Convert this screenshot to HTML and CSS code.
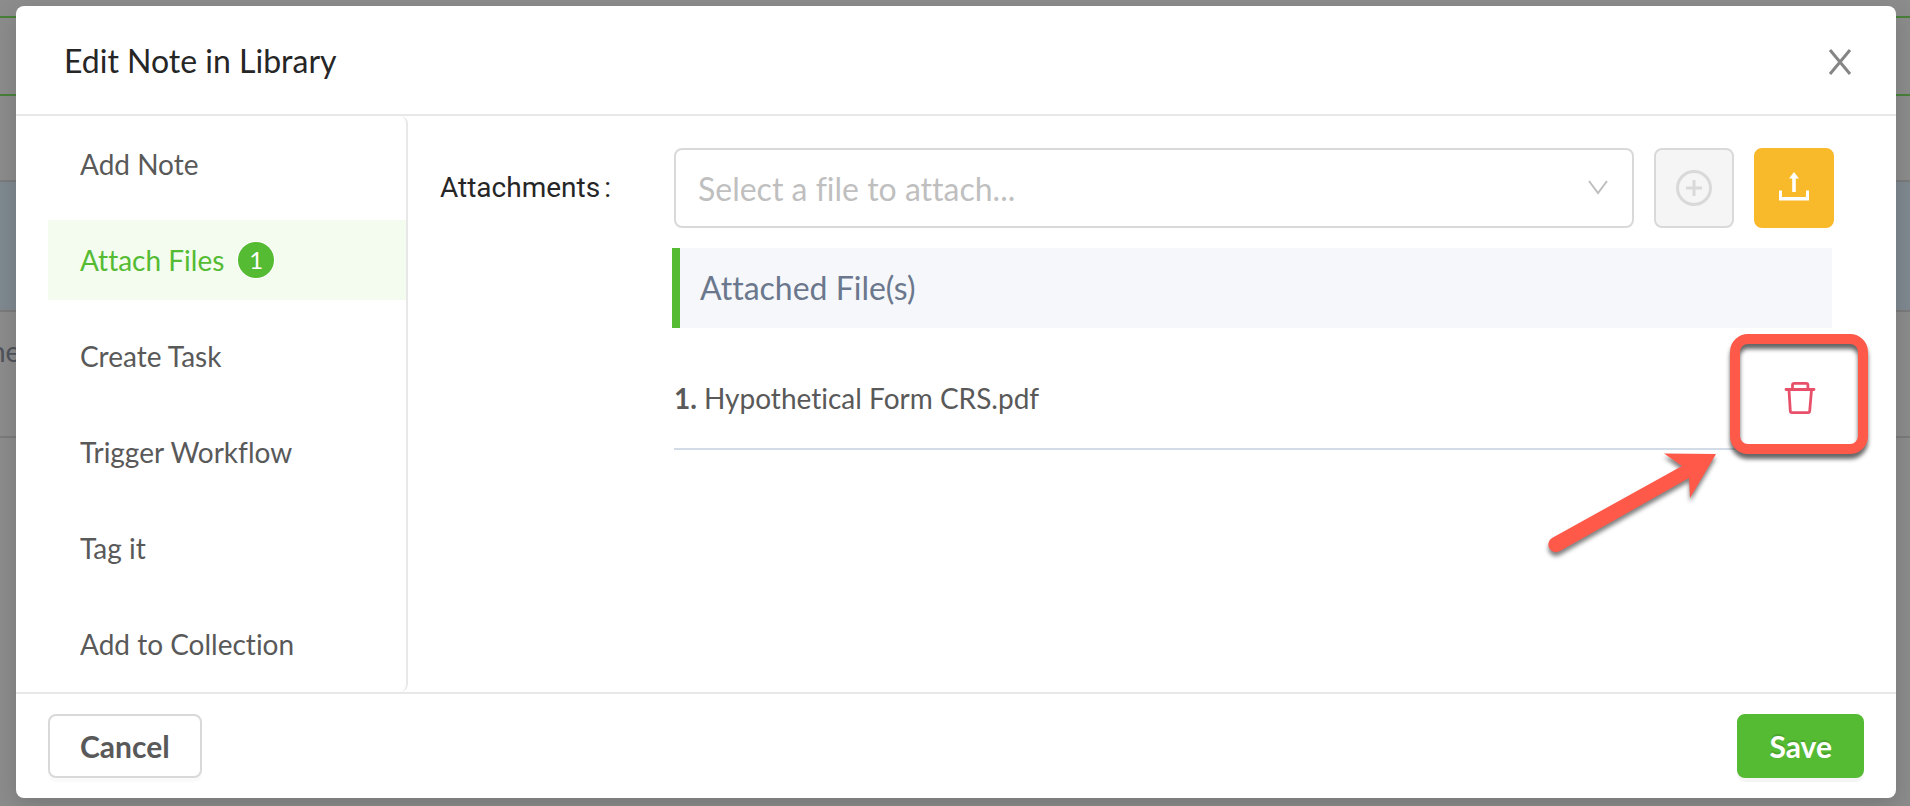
FILE: index.html
```html
<!DOCTYPE html>
<html lang="en">
<head>
  <meta charset="UTF-8">
  <meta name="viewport" content="width=device-width, initial-scale=1.0">
  <title>Edit Note in Library</title>
  <link rel="stylesheet" href="styles.css">
</head>
<body>
  <!-- page behind the dialog -->
  <div class="page">
    <div class="page-top"></div>
    <div class="page-bar"></div>
    <div class="page-row"></div>
    <div class="page-row selected"></div>
    <div class="page-row name"><span>ne</span></div>
  </div>

  <div class="modal-wrap">
    <div class="modal" role="dialog" aria-labelledby="modalTitle">
      <header class="modal-header">
        <h1 id="modalTitle">Edit Note in Library</h1>
        <button class="close" aria-label="Close">
          <svg width="24" height="26" viewBox="0 0 24 26" fill="none" stroke="#858585" stroke-width="3"><path d="M2 1l20 24M22 1L2 25"/></svg>
        </button>
      </header>

      <div class="modal-body">
        <nav class="tabs">
          <a href="#note">Add Note</a>
          <a href="#files" class="active">Attach Files <span class="badge">1</span></a>
          <a href="#task">Create Task</a>
          <a href="#workflow">Trigger Workflow</a>
          <a href="#tag">Tag it</a>
          <a href="#collection">Add to Collection</a>
        </nav>

        <main class="content">
          <label class="field-label" for="file">Attachments<span>:</span></label>
          <div class="field">
            <div class="controls">
              <div class="select">
                <select id="file">
                  <option>Select a file to attach...</option>
                </select>
                <svg width="22" height="16" viewBox="0 0 22 16" fill="none" stroke="#bfbfbf" stroke-width="2"><path d="M2 1l9 12L20 1"/></svg>
              </div>
              <button class="icon-btn" aria-label="Add file" disabled>
                <svg width="36" height="36" viewBox="0 0 36 36" fill="none" stroke="#d9d9d9" stroke-width="3"><circle cx="18" cy="18" r="16.5"/><path d="M18 10v16M10 18h16"/></svg>
              </button>
              <button class="icon-btn upload" aria-label="Upload file">
                <svg width="30" height="30" viewBox="0 0 30 30" fill="#fff"><path d="M15 -1l5 6.500h-3.200V19h-3.600V5.500H10z"/><path d="M0 17.500h3V24h24v-6.500h3V27.500H0z"/></svg>
              </button>
            </div>
            <h2>Attached File(s)</h2>
            <div class="file-row">
              <span><b>1.</b> Hypothetical Form CRS.pdf</span>
              <button class="delete" aria-label="Delete file">
                <svg width="32" height="34" viewBox="0 0 32 34" fill="none" stroke="#e8506a" stroke-width="2.800" stroke-linejoin="round" stroke-linecap="round"><path d="M2 8.500h28M8.500 8V4q0-1.700 1.700-1.700h12q1.700 0 1.700 1.700v4M5 9l1.300 21q.1 1.700 1.700 1.700h16q1.600 0 1.700-1.700L27.500 9"/></svg>
                <span class="callout"></span>
              </button>
            </div>
            <svg class="arrow" width="180" height="110" viewBox="0 0 180 110"><path d="M10 88L140 16l-18-12.500 52 .5-26 44-1-20L18 101a7.500 7.500 0 0 1-8-13z" fill="#ff594a"/></svg>
          </div>
        </main>
      </div>

      <footer class="modal-footer">
        <button class="btn">Cancel</button>
        <button class="btn primary">Save</button>
      </footer>
    </div>
  </div>
</body>
</html>
```
FILE: styles.css
```css
* {
  box-sizing: border-box;
}
body {
  margin: 0;
  font-family: Lato, sans-serif;
  font-size: 28px;
  font-variant-ligatures: none;
  color: #595959;
  background: #8c8c8c;
  overflow: hidden;
}
h1, h2 {
  margin: 0;
  font-weight: 400;
}
button, select {
  font: inherit;
  font-variant-ligatures: none;
}

/* page behind the dialog */
.page {
  position: absolute;
  inset: 0;
}
.page-top {
  height: 16px;
}
.page-bar {
  height: 80px;
  border-top: 2px solid #48803a;
  border-bottom: 2px solid #48803a;
}
.page-row {
  height: 86px;
  border-bottom: 2px solid #7b7b7b;
}
.page-row.selected {
  height: 130px;
  background: #7f8990;
}
.page-row.name {
  height: 126px;
  line-height: 78px;
  text-indent: -10px;
  color: #50535c;
}

.modal-wrap {
  position: relative;
  padding: 6px 14px 8px 16px;
  min-height: 100vh;
  display: flex;
}
.modal {
  flex: 1;
  display: flex;
  flex-direction: column;
  background: #fff;
  border-radius: 8px;
  box-shadow: 0 8px 24px rgba(0, 0, 0, 0.15);
}
.modal-header {
  display: flex;
  justify-content: space-between;
  align-items: center;
  height: 110px;
  padding: 0 32px 0 48px;
  border-bottom: 2px solid #e8e8e8;
}
.modal-header h1 {
  font-size: 32px;
  color: #262626;
}
.close {
  display: flex;
  padding: 14px 12px 10px;
  border: 0;
  background: none;
}

.modal-body {
  flex: 1;
  display: flex;
}
.tabs {
  width: 392px;
  padding: 8px 0 8px 32px;
  display: flex;
  flex-direction: column;
  gap: 16px;
  border-right: 2px solid #e8e8e8;
  border-radius: 0 8px 8px 0;
}
.tabs a {
  display: flex;
  align-items: center;
  gap: 14px;
  height: 80px;
  padding-left: 32px;
  color: #595959;
  text-decoration: none;
}
.tabs a.active {
  background: #f3fcee;
  color: #5b3;
}
.badge {
  width: 36px;
  height: 36px;
  border-radius: 50%;
  background: #5b3;
  box-shadow: 0 0 0 1px #fff;
  color: #fff;
  font-size: 24px;
  line-height: 36px;
  text-align: center;
}

.content {
  flex: 1;
  display: flex;
  padding: 32px 62px 0 32px;
}
.field-label {
  width: 234px;
  line-height: 80px;
  font-family: Roboto, sans-serif;
  color: #262626;
}
.field-label span {
  margin-left: 4px;
}
.field {
  position: relative;
  flex: 1;
}
.controls {
  display: flex;
  gap: 20px;
}
.select {
  position: relative;
  flex: 1;
}
.select select {
  width: 100%;
  height: 80px;
  padding: 0 22px;
  border: 2px solid #d9d9d9;
  border-radius: 8px;
  background: #fff;
  color: #bfbfbf;
  font-size: 32px;
  appearance: none;
}
.select svg {
  position: absolute;
  right: 25px;
  top: 32px;
}
.icon-btn {
  display: flex;
  align-items: center;
  justify-content: center;
  width: 80px;
  height: 80px;
  padding: 0;
  border: 2px solid #d9d9d9;
  border-radius: 8px;
  background: #f5f5f5;
}
.icon-btn svg {
  overflow: visible;
}
.icon-btn.upload {
  border-color: #f8b92b;
  background: #f8b92b;
}
.field h2 {
  margin: 20px 2px 20px -2px;
  padding-left: 20px;
  border-left: 8px solid #5b3;
  background: #f5f7fb;
  color: #6b778c;
  font-size: 32px;
  line-height: 80px;
}
.file-row {
  display: flex;
  align-items: center;
  justify-content: space-between;
  height: 102px;
  border-bottom: 2px solid #d3dce6;
}
.delete {
  position: relative;
  display: flex;
  padding: 16px 18px;
  border: 0;
  background: none;
}

/* marker around the delete button */
.callout {
  position: absolute;
  inset: -31px -34px -23px -36px;
  border: 10px solid #ff594a;
  border-radius: 18px;
  filter: drop-shadow(0 5px 2px rgba(0, 0, 0, 0.6));
}
.arrow {
  position: absolute;
  right: 112px;
  top: 302px;
  filter: drop-shadow(0 4px 2px rgba(0, 0, 0, 0.5));
}

.modal-footer {
  display: flex;
  justify-content: space-between;
  padding: 20px 32px;
  border-top: 2px solid #e8e8e8;
}
.btn {
  height: 64px;
  padding: 0 30px;
  border: 2px solid #d9d9d9;
  border-radius: 8px;
  background: #fff;
  color: #595959;
  font-size: 30px;
  font-weight: 700;
  box-shadow: 0 4px 0 rgba(0, 0, 0, 0.02);
}
.btn.primary {
  border-color: #5b3;
  background: #5b3;
  color: #fff;
  text-shadow: 0 -2px 0 rgba(0, 0, 0, 0.12);
  box-shadow: 0 4px 0 rgba(0, 0, 0, 0.04);
}
```
